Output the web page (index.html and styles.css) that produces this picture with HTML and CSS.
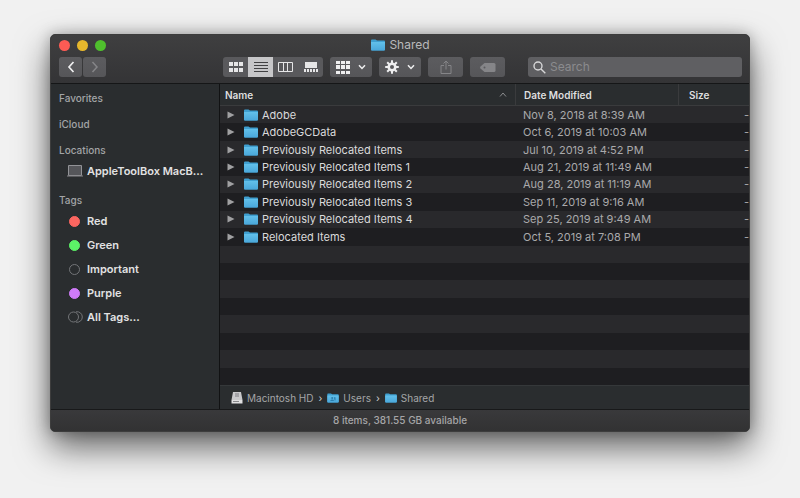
FILE: index.html
```html
<!DOCTYPE html>
<html lang="en">
<head>
<meta charset="utf-8">
<title>Shared</title>
<link rel="stylesheet" href="styles.css">
</head>
<body>
<svg class="defs" aria-hidden="true">
  <defs>
    <linearGradient id="folder-fill" x1="0" y1="0" x2="0" y2="1">
      <stop offset="0" stop-color="#62c0ea"/><stop offset="1" stop-color="#4aa7da"/>
    </linearGradient>
    <symbol id="folder" viewBox="0 0 14 12">
      <path d="M0 1.500Q0 .5 1 .5H4.500L6 1.500H13Q14 1.500 14 2.500V10.500Q14 11.500 13 11.500H1Q0 11.500 0 10.500Z" fill="#3f9fd0"/>
      <path d="M0 3H14V10.500Q14 11.500 13 11.500H1Q0 11.500 0 10.500Z" fill="url(#folder-fill)"/>
    </symbol>
    <symbol id="down" viewBox="0 0 8 6"><path d="M1 1.200 4 4.500 7 1.200" fill="none" stroke="currentColor" stroke-width="1.500"/></symbol>
    <symbol id="triangle" viewBox="0 0 8 8"><path d="M.5 .5 7.500 4 .5 7.500Z" fill="currentColor"/></symbol>
  </defs>
</svg>
<main class="window">
  <header class="titlebar">
    <div class="title-row">
      <div class="lights">
        <button class="light close" aria-label="Close"></button>
        <button class="light minimize" aria-label="Minimize"></button>
        <button class="light zoom" aria-label="Zoom"></button>
      </div>
      <h1 class="title"><svg class="folder" aria-hidden="true"><use href="#folder"/></svg>Shared</h1>
    </div>
    <div class="toolbar">
      <div class="nav">
        <button class="tool" aria-label="Back"><svg width="8" height="12" viewBox="0 0 8 12"><path d="M6.500 1 2 6l4.500 5" fill="none" stroke="currentColor" stroke-width="1.700"/></svg></button>
        <button class="tool dim" aria-label="Forward" disabled><svg width="8" height="12" viewBox="0 0 8 12"><path d="M1.500 1 6 6l-4.500 5" fill="none" stroke="currentColor" stroke-width="1.500"/></svg></button>
      </div>
      <div class="views">
        <button class="view" aria-label="Icon view"><svg width="14" height="10" viewBox="0 0 14 10" fill="currentColor"><path d="M0 0h4v4H0zM5 0h4v4H5zM10 0h4v4h-4zM0 6h4v4H0zM5 6h4v4H5zM10 6h4v4h-4z"/></svg></button>
        <button class="view active" aria-label="List view" aria-pressed="true"><svg width="14" height="12" viewBox="0 0 14 12" stroke="currentColor"><path d="M0 1.500h14M0 4.500h14M0 7.500h14M0 10.500h14"/></svg></button>
        <button class="view" aria-label="Column view"><svg width="15" height="10" viewBox="0 0 15 10" fill="none" stroke="currentColor"><path d="M.5 .5h14v9H.5zM5.500 .5v9M9.500 .5v9"/></svg></button>
        <button class="view" aria-label="Gallery view"><svg width="14" height="10" viewBox="0 0 14 10" fill="currentColor"><path d="M1 0h12v6H1zM0 7h2v3H0zM3 7h2v3H3zM6 7h2v3H6zM9 7h2v3H9zM12 7h2v3h-2z"/></svg></button>
      </div>
      <button class="tool menu" aria-label="Group items"><svg width="14" height="13" viewBox="0 0 14 13" fill="currentColor"><path d="M0 0h4v3H0zM5 0h4v3H5zM10 0h4v3h-4zM0 4h4v4H0zM5 4h4v4H5zM10 4h4v4h-4zM0 10h4v3H0zM5 10h4v3H5zM10 10h4v3h-4z"/></svg><svg class="down"><use href="#down"/></svg></button>
      <button class="tool menu" aria-label="Actions"><svg width="14" height="14" viewBox="-7 -7 14 14" fill="none" stroke="currentColor"><circle r="3.300" stroke-width="2.600"/><path stroke-width="2" d="M0-6.800V-4M0 4v2.800M-6.800 0H-4M4 0h2.800M-4.800-4.800l2 2M2.800 2.800l2 2M-4.800 4.800l2-2M2.800-2.800l2-2"/></svg><svg class="down"><use href="#down"/></svg></button>
      <button class="tool wide dim" aria-label="Share" disabled><svg width="12" height="14" viewBox="0 0 12 14" fill="none" stroke="currentColor"><path d="M4 5.500H1v8h10v-8H8M6 9.500V1.200M3.500 3.500 6 1l2.500 2.500"/></svg></button>
      <button class="tool wide dim" aria-label="Edit tags" disabled><svg width="16" height="9" viewBox="0 0 16 9"><path d="M4.500 0H14q1.500 0 1.500 1.500v6Q15.500 9 14 9H4.500L.5 5.500q-.8-1 0-2Z" fill="currentColor"/><circle cx="4.500" cy="4.500" r="1" fill="#5b5b5e"/></svg></button>
      <label class="search">
        <svg width="13" height="13" viewBox="0 0 13 13" fill="none" stroke="currentColor" stroke-width="1.400" aria-hidden="true"><circle cx="5" cy="5" r="4"/><path d="m8 8 4.300 4.300"/></svg>
        <input type="search" placeholder="Search" aria-label="Search">
      </label>
    </div>
  </header>
  <div class="body">
    <nav class="sidebar" aria-label="Sidebar">
      <section><h2>Favorites</h2></section>
      <section><h2>iCloud</h2></section>
      <section>
        <h2>Locations</h2>
        <a href="#mac"><svg width="16" height="12" viewBox="0 0 16 12" aria-hidden="true"><path d="M1.500 .5h13v10h-13z" fill="#55565a" stroke="#929397"/><path d="M0 10.500h16v1H0z" fill="#85868a"/></svg><span>AppleToolBox MacB...</span></a>
      </section>
      <section>
        <h2>Tags</h2>
        <a href="#red"><i class="dot red"></i><span>Red</span></a>
        <a href="#green"><i class="dot green"></i><span>Green</span></a>
        <a href="#important"><i class="dot"></i><span>Important</span></a>
        <a href="#purple"><i class="dot purple"></i><span>Purple</span></a>
        <a href="#all"><svg width="16" height="12" viewBox="0 0 16 12" fill="none" stroke="#737578" aria-hidden="true"><path d="M9 .8a5.300 5.300 0 1 1 0 10.400"/><circle cx="6.500" cy="6" r="5"/></svg><span>All Tags...</span></a>
      </section>
    </nav>
    <div class="content">
      <div class="list">
        <table>
          <thead>
            <tr><th class="name"><div class="sort">Name<svg width="8" height="5" viewBox="0 0 8 5" aria-hidden="true"><path d="M1 4.500 4 1l3 3.500" fill="none" stroke="#8b8c8f"/></svg></div></th><th class="date">Date Modified</th><th class="size">Size</th></tr>
          </thead>
          <tbody>
            <tr><td><div class="file"><button class="expand" aria-label="Expand"><svg><use href="#triangle"/></svg></button><svg class="folder"><use href="#folder"/></svg>Adobe</div></td><td>Nov 8, 2018 at 8:39 AM</td><td>-</td></tr>
            <tr><td><div class="file"><button class="expand" aria-label="Expand"><svg><use href="#triangle"/></svg></button><svg class="folder"><use href="#folder"/></svg>AdobeGCData</div></td><td>Oct 6, 2019 at 10:03 AM</td><td>-</td></tr>
            <tr><td><div class="file"><button class="expand" aria-label="Expand"><svg><use href="#triangle"/></svg></button><svg class="folder"><use href="#folder"/></svg>Previously Relocated Items</div></td><td>Jul 10, 2019 at 4:52 PM</td><td>-</td></tr>
            <tr><td><div class="file"><button class="expand" aria-label="Expand"><svg><use href="#triangle"/></svg></button><svg class="folder"><use href="#folder"/></svg>Previously Relocated Items 1</div></td><td>Aug 21, 2019 at 11:49 AM</td><td>-</td></tr>
            <tr><td><div class="file"><button class="expand" aria-label="Expand"><svg><use href="#triangle"/></svg></button><svg class="folder"><use href="#folder"/></svg>Previously Relocated Items 2</div></td><td>Aug 28, 2019 at 11:19 AM</td><td>-</td></tr>
            <tr><td><div class="file"><button class="expand" aria-label="Expand"><svg><use href="#triangle"/></svg></button><svg class="folder"><use href="#folder"/></svg>Previously Relocated Items 3</div></td><td>Sep 11, 2019 at 9:16 AM</td><td>-</td></tr>
            <tr><td><div class="file"><button class="expand" aria-label="Expand"><svg><use href="#triangle"/></svg></button><svg class="folder"><use href="#folder"/></svg>Previously Relocated Items 4</div></td><td>Sep 25, 2019 at 9:49 AM</td><td>-</td></tr>
            <tr><td><div class="file"><button class="expand" aria-label="Expand"><svg><use href="#triangle"/></svg></button><svg class="folder"><use href="#folder"/></svg>Relocated Items</div></td><td>Oct 5, 2019 at 7:08 PM</td><td>-</td></tr>
            <tr><td colspan="3"></td></tr>
            <tr><td colspan="3"></td></tr>
            <tr><td colspan="3"></td></tr>
            <tr><td colspan="3"></td></tr>
            <tr><td colspan="3"></td></tr>
            <tr><td colspan="3"></td></tr>
            <tr><td colspan="3"></td></tr>
            <tr><td colspan="3"></td></tr>
          </tbody>
        </table>
      </div>
      <nav class="path" aria-label="Path">
        <a href="#hd"><svg width="12" height="12" viewBox="0 0 12 12" aria-hidden="true"><path d="M2 0h8l1.500 8H.5z" fill="#c9c9cb"/><path d="M4 1h4v4H4z" fill="#a2a2a6"/><path d="M.5 8h11v3.500H.5z" fill="#e0e0e1"/><path d="M2 9.500h6" stroke="#88888b"/></svg>Macintosh HD</a>
        <span class="sep">›</span>
        <a href="#users"><svg class="folder" viewBox="0 0 14 12" aria-hidden="true"><use href="#folder"/><circle cx="6" cy="6" r="1.200" fill="#2c7fae"/><path d="M3.500 9.500q2.500-3.500 5 0zM8 5h2v4H9z" fill="#2c7fae"/></svg>Users</a>
        <span class="sep">›</span>
        <a href="#shared"><svg class="folder" aria-hidden="true"><use href="#folder"/></svg>Shared</a>
      </nav>
    </div>
  </div>
  <footer class="status">8 items, 381.55 GB available</footer>
</main>
</body>
</html>
```
FILE: styles.css
```css
* { box-sizing: border-box; }

body {
  margin: 0;
  min-height: 100vh;
  padding: 34px 50px 66px;
  display: flex;
  background: #f1f1f1;
  font-family: Inter, "Liberation Sans", sans-serif;
  font-size: 11px;
  line-height: 16px;
  color: #dededf;
}

button { border: 0; padding: 0; color: inherit; font: inherit; background: none; }
a { color: inherit; text-decoration: none; }
svg { flex: none; }
.defs { position: absolute; width: 0; height: 0; }

.window {
  flex: 1;
  min-width: 0;
  display: flex;
  flex-direction: column;
  border: 1px solid #3d3d3d;
  border-radius: 5px;
  overflow: hidden;
  background: #2a2d2f;
  box-shadow: 0 15px 34px rgba(0, 0, 0, .6), 0 0 14px rgba(0, 0, 0, .25);
}

.titlebar {
  padding: 2px 7px 6px 8px;
  background: linear-gradient(#3f3f40, #343436);
  border-bottom: 1px solid #151617;
}

.title-row {
  display: grid;
  grid-template-columns: 1fr auto 1fr;
  align-items: center;
  height: 16px;
}

.lights { display: flex; gap: 7px; }
.light { width: 11px; height: 11px; border-radius: 50%; }
.close { background: #fc5b54; }
.minimize { background: #e6b72c; }
.zoom { background: #4fbf2d; }

.title {
  display: flex;
  align-items: center;
  gap: 4px;
  margin: 0;
  font-size: 12px;
  font-weight: 400;
  color: #b9b9bb;
}

.folder { width: 14px; height: 12px; }

.toolbar { display: flex; gap: 7px; margin-top: 4px; height: 20px; }
.nav { display: flex; gap: 1px; margin-right: 110px; }

.tool {
  display: flex;
  align-items: center;
  justify-content: center;
  width: 23px;
  border-radius: 3px;
  background: linear-gradient(#5c5c5f, #565659);
  color: #eeeeef;
}

.dim { color: #858588; }
.menu { width: 42px; gap: 8px; }
.wide { width: 35px; }
.down { width: 8px; height: 6px; }

.views { display: flex; width: 100px; border-radius: 3px; overflow: hidden; background: #59595c; }
.view { flex: 1; display: flex; align-items: center; justify-content: center; color: #e6e6e7; }
.active { background: #c6c6c8; color: #414143; }

.search {
  flex: 1;
  display: flex;
  align-items: center;
  gap: 4px;
  margin-left: 16px;
  padding-left: 5px;
  border-radius: 3px;
  background: #5f5f62;
  color: #d7d7d8;
}

.search input {
  flex: 1;
  min-width: 0;
  padding: 0;
  border: 0;
  outline: 0;
  background: none;
  color: inherit;
  font: inherit;
  font-size: 12px;
}

.search input::placeholder { color: #8b8b8e; opacity: 1; }

.body { flex: 1; display: flex; min-height: 0; }

.sidebar {
  flex: none;
  width: 169px;
  padding: 5px 8px;
  display: flex;
  flex-direction: column;
  gap: 8px;
  background: #2a2d2f;
  border-right: 1px solid #111213;
}

.sidebar h2 { margin: 0; font-size: 10px; line-height: 18px; font-weight: 500; color: #a3a5a7; }
.sidebar a {
  display: flex;
  align-items: center;
  gap: 4px;
  height: 24px;
  padding-left: 8px;
  font-size: 11px;
  font-weight: 600;
  color: #e2e2e3;
  white-space: nowrap;
}

.dot { flex: none; width: 11px; height: 11px; margin: 0 3px 0 2px; border: 1px solid #737578; border-radius: 50%; }
.red { background: #fb6660; border-color: #fb6660; }
.green { background: #5cf367; border-color: #5cf367; }
.purple { background: #cf7bf8; border-color: #cf7bf8; }

.content { flex: 1; min-width: 0; display: flex; flex-direction: column; }
.list { flex: 1; display: flex; background: #1e1e21; }

table {
  flex: none;
  width: 100%;
  table-layout: fixed;
  border-collapse: separate;
  border-spacing: 0;
  white-space: nowrap;
}

th {
  height: 22px;
  padding: 0 10px;
  background: #2a2d2f;
  border-bottom: 1px solid #3a3b3d;
  border-left: 1px solid #3a3b3d;
  font-size: 10px;
  font-weight: 600;
  text-align: left;
}

th.name { padding: 0 8px 0 5px; border-left: 0; }
th.date { width: 163px; padding-left: 8px; }
th.size { width: 71px; }
.sort { display: flex; align-items: center; justify-content: space-between; }

td { height: 17px; padding: 0 8px; color: #a9a9ab; line-height: 16px; }
td:first-child { padding: 0; color: #dadadb; }
td:nth-child(3) { padding: 0; text-align: right; }
tbody tr:nth-child(odd) { background: #29292c; }

.file { display: flex; align-items: center; gap: 4px; padding-left: 7px; }
.expand { display: flex; margin-right: 5px; color: #a0a0a2; }
.expand svg { width: 8px; height: 8px; }

.path {
  display: flex;
  align-items: center;
  gap: 5px;
  height: 24px;
  padding-left: 11px;
  background: #2a2d2f;
  border-top: 1px solid #35383a;
  font-size: 10px;
  color: #a5a6a8;
}

.path a { display: flex; align-items: center; gap: 4px; }
.path .folder { width: 12px; height: 10px; }
.sep { color: #cfcfd0; }

.status {
  height: 22px;
  line-height: 20px;
  border-top: 1px solid #18191a;
  background: linear-gradient(#39393b, #323233);
  font-size: 10px;
  font-weight: 500;
  text-align: center;
  color: #a5a5a7;
}
```
